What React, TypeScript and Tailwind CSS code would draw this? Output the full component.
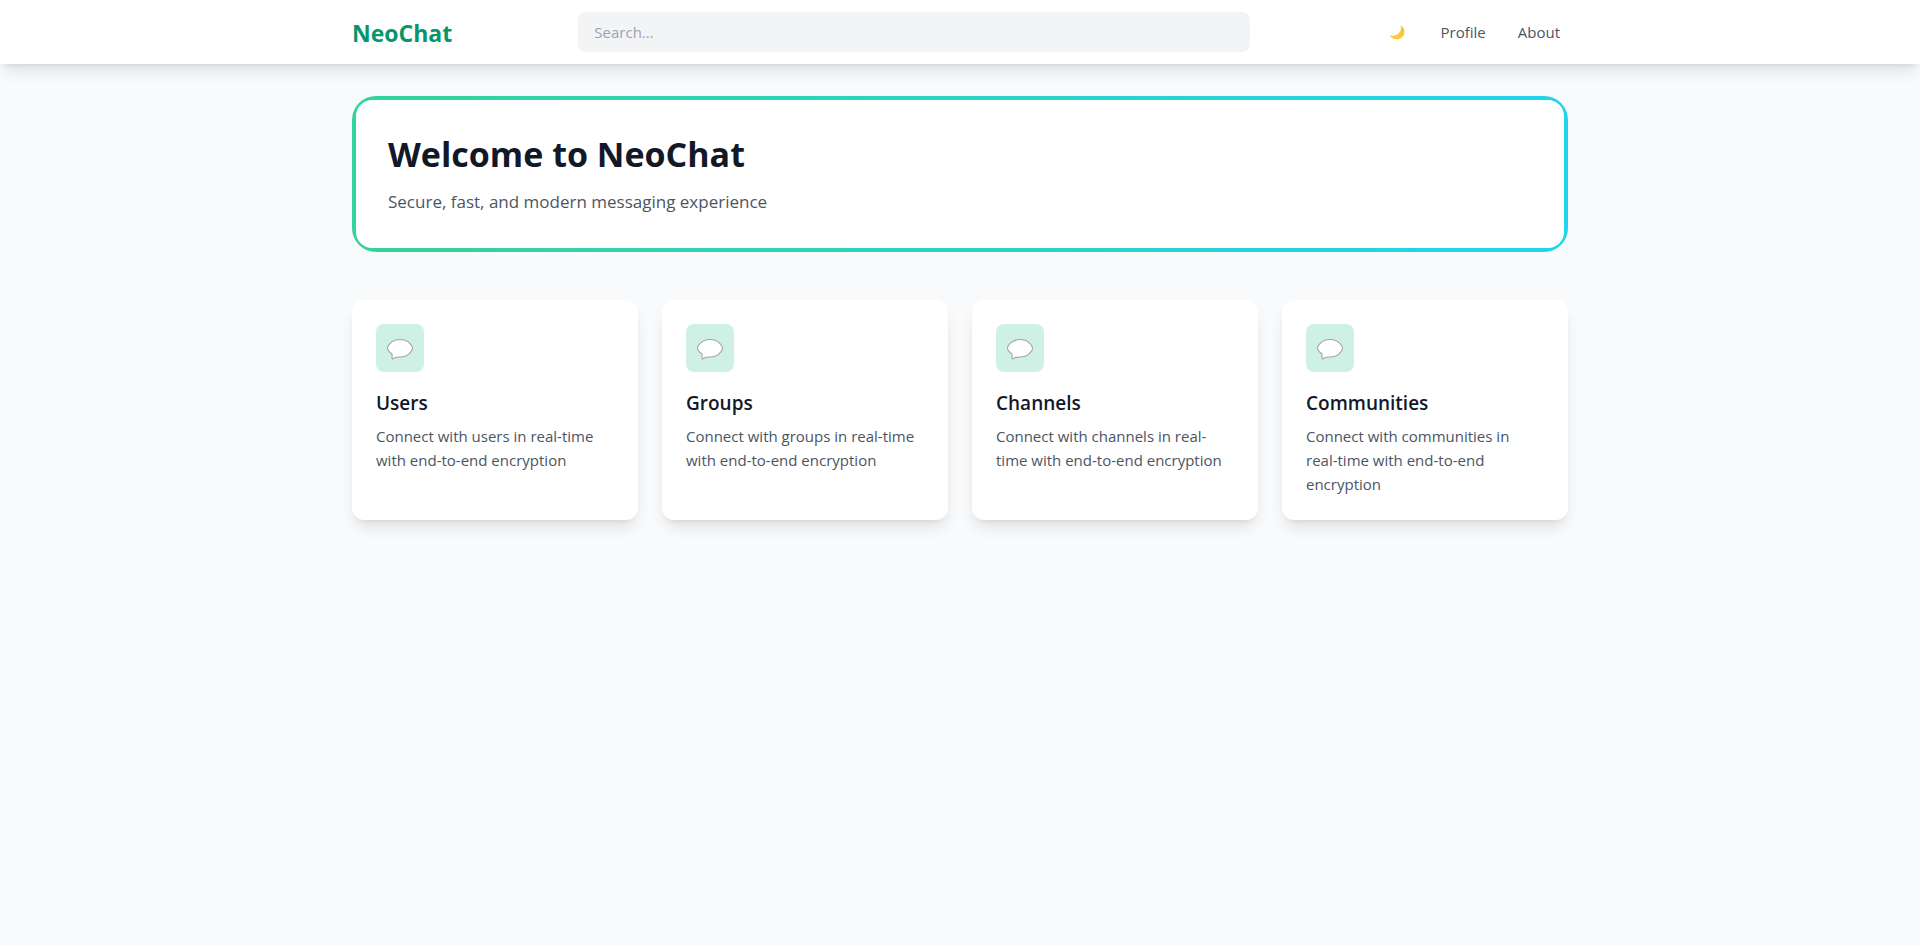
const sections = ["Users", "Groups", "Channels", "Communities"];

function MoonIcon() {
  return (
    <svg className="size-6" viewBox="-1 -1 24 24" aria-hidden="true">
      <path
        d="M14.600 4.200C17.600 5.800 19 8.800 18.400 12c-.7 3.900-3.700 6.300-7.300 6.300-3.400 0-6.300-1.600-7.900-4.300 3.400 1.400 7.200.6 9.600-1.700 2.200-2.200 2.800-5.200 1.800-8.100z"
        fill="#fdcb3a"
      />
      <path
        d="M15.300 6.200c1.300 3.600-.3 7.200-3.400 8.800 2.600-.2 4.700-1.800 5.100-4.200.3-1.700-.3-3.400-1.700-4.600z"
        fill="#f6bd2f"
      />
    </svg>
  );
}

function BubbleIcon() {
  return (
    <svg className="h-6 w-8" viewBox="0 0 32 24" aria-hidden="true">
      <path
        d="M16 3.500c3.700 0 6.600 1 8.700 2.900 1.800 1.600 3.800 4 3.800 5.900s-2 4.200-3.800 5.800c-2.100 1.900-5 2.900-8.700 2.900-2.600 0-4.400.3-5.700 1l-1.400.9c-.4.300-.8.100-.8-.4l-.1-4.500C5.800 16.500 3.500 14.200 3.500 12.300c0-1.900 2-4.300 3.800-5.900C9.400 4.500 12.300 3.500 16 3.500z"
        fill="#fff"
        stroke="#a1a5a3"
        strokeWidth="1.100"
        strokeLinejoin="round"
      />
    </svg>
  );
}

function Header() {
  return (
    <header className="relative bg-white shadow-[0_10px_15px_-3px_rgba(0,0,0,0.1),0_4px_6px_-4px_rgba(0,0,0,0.1)]">
      <div className="mx-auto flex max-w-7xl items-center justify-between px-8 py-3">
        <a href="#" className="pt-0.5 text-[23px] leading-8 font-bold text-[#059669]">
          NeoChat
        </a>
        <input
          type="search"
          aria-label="Search"
          placeholder="Search..."
          className="h-10 w-full max-w-2xl rounded-lg bg-[#f3f4f6] px-4 text-[15px] leading-6 text-[#111827] outline-none placeholder:text-[#9ca3af]"
        />
        <nav className="flex items-center gap-4 text-[15px] leading-6 text-[#4b5563]">
          <button type="button" aria-label="Toggle dark mode" className="p-2">
            <MoonIcon />
          </button>
          <a href="#profile" className="px-2">
            Profile
          </a>
          <a href="#about" className="px-2">
            About
          </a>
        </nav>
      </div>
    </header>
  );
}

function Hero() {
  return (
    <section className="rounded-3xl bg-linear-to-r/srgb from-[#34d399] to-[#22d3ee] p-1">
      <div className="rounded-2xl bg-white p-8">
        <h1 className="mb-3 text-[34px] leading-11 font-bold text-[#111827]">
          Welcome to NeoChat
        </h1>
        <p className="text-[17px] leading-7 text-[#4b5563]">
          Secure, fast, and modern messaging experience
        </p>
      </div>
    </section>
  );
}

function SectionCard({ name }: { name: string }) {
  const description = `Connect with ${name.toLowerCase()} in real-time with end-to-end encryption`;

  return (
    <article className="rounded-xl bg-white p-6 shadow-[0_10px_15px_-3px_rgba(0,0,0,0.1),0_4px_6px_-4px_rgba(0,0,0,0.1)]">
      <div className="mb-4 flex size-12 items-center justify-center rounded-lg bg-[#cff1e5]">
        <BubbleIcon />
      </div>
      <h2 className="mb-1.5 text-[19px] leading-[30px] font-semibold text-[#111827]">
        {name}
      </h2>
      <p className="text-[15px] leading-6 text-[#4b5563]">{description}</p>
    </article>
  );
}

export default function App() {
  return (
    <div className="min-h-screen bg-[#f9fafb] font-['Open_Sans','Noto_Sans',sans-serif]">
      <Header />
      <main className="mx-auto max-w-7xl px-8 py-8">
        <Hero />
        <div className="mt-12 grid grid-cols-1 gap-6 md:grid-cols-2 lg:grid-cols-4">
          {sections.map((name) => (
            <SectionCard key={name} name={name} />
          ))}
        </div>
      </main>
    </div>
  );
}
